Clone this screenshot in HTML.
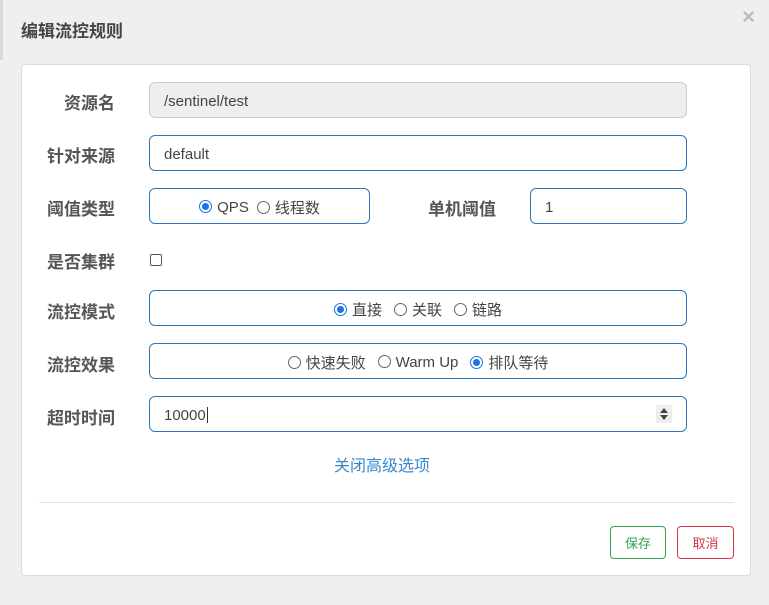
<!DOCTYPE html>
<html><head><meta charset="utf-8"><style>
*{box-sizing:border-box;margin:0;padding:0}
body{width:769px;height:605px;background:#efefef;font-family:"Liberation Sans","Noto Sans CJK SC",sans-serif;position:relative;overflow:hidden;color:#333}
.abs{position:absolute}
.title{left:21px;top:17px;font-size:17px;font-weight:bold;color:#444}
.close{right:14px;top:4px;font-size:22px;color:#bbb;font-weight:bold}
.card{left:21px;top:64px;width:730px;height:512px;background:#fff;border:1px solid #ddd;border-radius:4px}
.lbl{font-size:17px;font-weight:bold;color:#555;width:100px;text-align:right}
.inp{border:1px solid #2f76bd;border-radius:6px;height:36px;background:#fff;font-size:15px;color:#444;display:flex;align-items:center;padding-left:14px;padding-top:2px}
.r{display:inline-block;width:13px;height:13px;border:1px solid #666;border-radius:50%;vertical-align:-1px;margin-right:5px;position:relative}
.r.on{border:1px solid #1a73e8;background:#fff}
.r.on:after{content:"";position:absolute;left:2px;top:2px;width:7px;height:7px;border-radius:50%;background:#1a73e8}
.c{justify-content:center;padding-left:0}
.c span.o{margin:0 6px;font-size:15px}
.btn{height:33px;border-radius:4px;font-size:13px;display:flex;align-items:center;justify-content:center;background:#fff}
</style></head><body>
<div class="abs" style="left:0;top:0;width:3px;height:60px;background:#d8d8d8"></div>
<div class="abs title">编辑流控规则</div>
<div class="abs close">×</div>
<div class="abs card"></div>

<div class="abs lbl" style="left:15px;top:89px">资源名</div>
<div class="abs inp" style="left:149px;top:82px;width:538px;background:#eee;border-color:#ccc">/sentinel/test</div>

<div class="abs lbl" style="left:15px;top:142px">针对来源</div>
<div class="abs inp" style="left:149px;top:135px;width:538px">default</div>

<div class="abs lbl" style="left:15px;top:195px">阈值类型</div>
<div class="abs inp c" style="left:149px;top:188px;width:221px"><span class="o" style="margin:0 4px"><i class="r on"></i>QPS</span><span class="o" style="margin:0 4px"><i class="r"></i>线程数</span></div>
<div class="abs lbl" style="left:396px;top:195px">单机阈值</div>
<div class="abs inp" style="left:530px;top:188px;width:157px">1</div>

<div class="abs lbl" style="left:15px;top:248px">是否集群</div>
<div class="abs" style="left:150px;top:254px;width:12px;height:12px;border:1px solid #555;border-radius:2px"></div>

<div class="abs lbl" style="left:15px;top:298px">流控模式</div>
<div class="abs inp c" style="left:149px;top:290px;width:538px"><span class="o"><i class="r on"></i>直接</span><span class="o"><i class="r"></i>关联</span><span class="o"><i class="r"></i>链路</span></div>

<div class="abs lbl" style="left:15px;top:351px">流控效果</div>
<div class="abs inp c" style="left:149px;top:343px;width:538px"><span class="o"><i class="r"></i>快速失败</span><span class="o"><i class="r"></i>Warm Up</span><span class="o"><i class="r on"></i>排队等待</span></div>

<div class="abs lbl" style="left:15px;top:404px">超时时间</div>
<div class="abs inp" style="left:149px;top:396px;width:538px">10000<span style="border-left:1px solid #333;height:16px;margin-left:1px"></span></div>
<div class="abs" style="left:656px;top:405px;width:16px;height:18px;background:#eee"></div>
<div class="abs" style="left:660px;top:408px;width:0;height:0;border-left:4px solid transparent;border-right:4px solid transparent;border-bottom:5px solid #444"></div>
<div class="abs" style="left:660px;top:415px;width:0;height:0;border-left:4px solid transparent;border-right:4px solid transparent;border-top:5px solid #444"></div>

<div class="abs" style="left:334px;top:452px;font-size:16px;color:#3a87c8">关闭高级选项</div>
<div class="abs" style="left:39px;top:502px;width:695px;height:1px;background:#e2e2e2"></div>
<div class="abs btn" style="left:610px;top:526px;width:56px;border:1px solid #2ea44f;color:#2ea44f">保存</div>
<div class="abs btn" style="left:677px;top:526px;width:57px;border:1px solid #dc3545;color:#dc3545">取消</div>
</body></html>
